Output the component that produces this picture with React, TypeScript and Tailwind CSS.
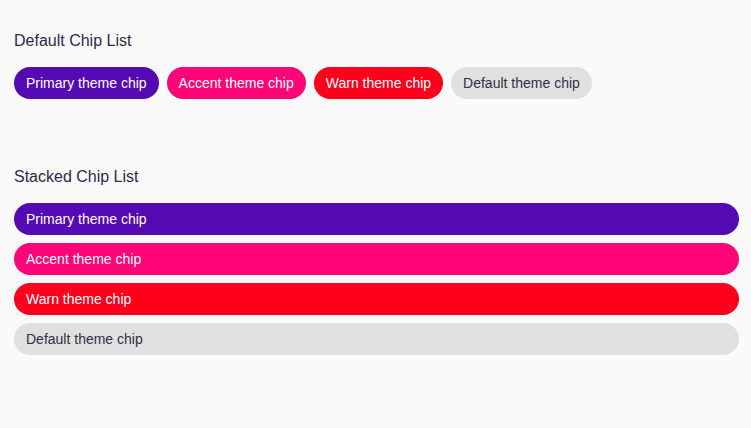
const chips = [
  { label: "Primary theme chip", cls: "bg-[#530ab2] text-white" },
  { label: "Accent theme chip", cls: "bg-[#ff0578] text-white" },
  { label: "Warn theme chip", cls: "bg-[#ff001c] text-white" },
  { label: "Default theme chip", cls: "bg-[#e0e0e0] text-[#352e42]" },
];

function Chip({ label, cls, stacked }: { label: string; cls: string; stacked?: boolean }) {
  return (
    <div
      className={`h-8 flex items-center px-3 rounded-full text-sm ${cls} ${stacked ? "w-full" : ""}`}
    >
      {label}
    </div>
  );
}

export default function App() {
  return (
    <div
      className="min-h-[428px] bg-[#fafafa] pt-[29px] pl-[14px] pr-[12px]"
      style={{ fontFamily: '"Liberation Sans", Arial, sans-serif' }}
    >
      <h2 className="text-base leading-6 text-[#33264a] mb-[14px]">Default Chip List</h2>
      <div className="flex gap-2">
        {chips.map((c) => (
          <Chip key={c.label} label={c.label} cls={c.cls} />
        ))}
      </div>

      <h2 className="text-base leading-6 text-[#33264a] mt-[66px] mb-[14px]">Stacked Chip List</h2>
      <div className="flex flex-col gap-2">
        {chips.map((c) => (
          <Chip key={c.label} label={c.label} cls={c.cls} stacked />
        ))}
      </div>
    </div>
  );
}
